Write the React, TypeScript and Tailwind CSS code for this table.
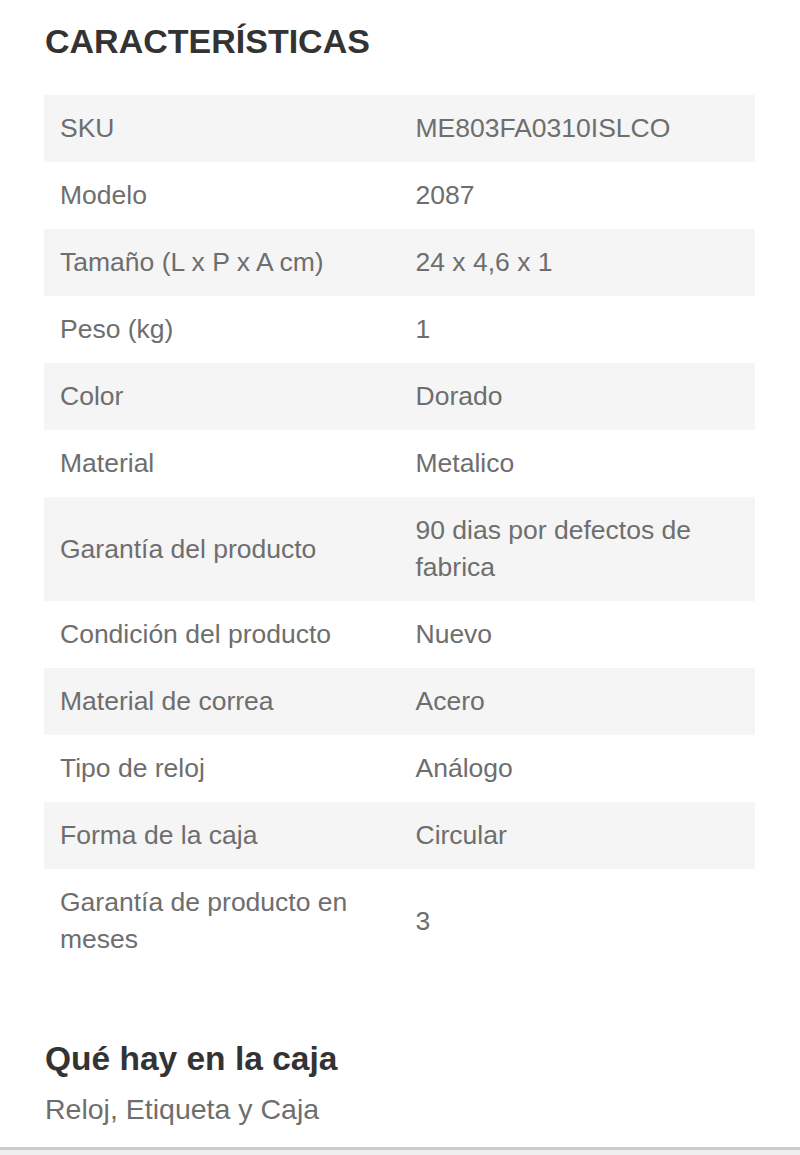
import React from "react";

const rows: [string, string][] = [
  ["SKU", "ME803FA0310ISLCO"],
  ["Modelo", "2087"],
  ["Tamaño (L x P x A cm)", "24 x 4,6 x 1"],
  ["Peso (kg)", "1"],
  ["Color", "Dorado"],
  ["Material", "Metalico"],
  ["Garantía del producto", "90 dias por defectos de fabrica"],
  ["Condición del producto", "Nuevo"],
  ["Material de correa", "Acero"],
  ["Tipo de reloj", "Análogo"],
  ["Forma de la caja", "Circular"],
  ["Garantía de producto en meses", "3"],
];

export default function App() {
  return (
    <div className="w-[800px] bg-white font-['Liberation_Sans',Arial,sans-serif]">
      <div className="pl-[44px] pr-[45px] pt-[22px] pb-[21px] border-b-[3px] border-[#cdcdcd]">
        <h2 className="text-[34px] leading-[39px] font-bold text-[#333333] pl-[1px] mb-[34px]">
          CARACTERÍSTICAS
        </h2>
        <table className="w-full table-fixed border-collapse">
          <tbody>
            {rows.map(([k, v], i) => (
              <tr key={k} className={i % 2 === 0 ? "bg-[#f5f5f5]" : "bg-white"}>
                <td className="w-1/2 pl-[16px] pr-[16px] py-[15px] text-[26.5px] leading-[37px] text-[#6e6e6e] align-middle">
                  {k}
                </td>
                <td className="w-1/2 pl-[16px] pr-[16px] py-[15px] text-[26.5px] leading-[37px] text-[#6e6e6e] align-middle">
                  {v}
                </td>
              </tr>
            ))}
          </tbody>
        </table>
        <h3 className="mt-[67px] pl-[1px] text-[33.5px] leading-[38px] font-bold text-[#333333]">
          Qué hay en la caja
        </h3>
        <p className="mt-[15px] pl-[1px] text-[28.5px] leading-[33px] text-[#6e6e6e]">
          Reloj, Etiqueta y Caja
        </p>
      </div>
      <div className="h-[6px] bg-[#efefef]" />
    </div>
  );
}
